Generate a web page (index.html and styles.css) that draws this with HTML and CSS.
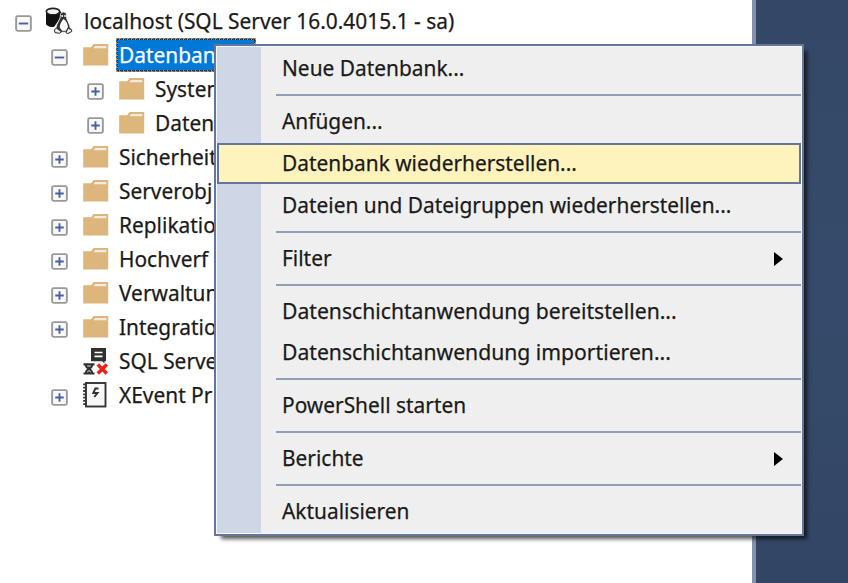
FILE: index.html
```html
<!DOCTYPE html>
<html lang="de">
<head>
<meta charset="utf-8">
<title>Objekt-Explorer</title>
<link rel="stylesheet" href="styles.css">
</head>
<body>
<svg class="defs" width="0" height="0">
  <symbol id="plus" viewBox="0 0 18 18"><rect x="1.2" y="1.2" width="15.6" height="15.6" rx="1.6" fill="#f8f8f8" stroke="#999" stroke-width="2"/><path d="M4.5 9h9M9 4.5v9" stroke="#4560a8" stroke-width="2"/></symbol>
  <symbol id="minus" viewBox="0 0 18 18"><rect x="1.2" y="1.2" width="15.6" height="15.6" rx="1.6" fill="#f8f8f8" stroke="#999" stroke-width="2"/><path d="M4 9h10" stroke="#4560a8" stroke-width="2"/></symbol>
  <symbol id="folder" viewBox="0 0 26 24"><path d="M.2 4.2h8L10.5 1H25.2v21.6H.2z" fill="#dcb67a"/><path d="M12 3h11.3v2.200H10.500z" fill="#f0ebe2"/></symbol>
</svg>
<main class="window">
  <section class="tree">
    <div class="row root"><svg class="toggle"><use href="#minus"/></svg>
      <svg class="icon server" viewBox="0 0 28 28"><path d="M1 4.500v12.800c1.500 2 4 2.800 8 2.800l7-10V4.500z" fill="#111"/><ellipse cx="8" cy="4.600" rx="6.700" ry="3.200" fill="#f4f4f4" stroke="#222" stroke-width="1.600"/><path d="M18.500 5c-2.700 0-3.400 2-3.200 4.700-.2 3-4 7-4.200 10.800l-2 2.500 1 3 5 .8 2-1.600h3.500l2.200 1.600 4-1.800.4-2.400-2-1.800c-.2-3.800-3.700-7.800-3.700-11 .1-3-.5-4.800-3-4.800z" fill="#333" stroke="#fff" stroke-width=".8"/><path d="M18.500 12c-2.300 2.300-4 6-3.700 8.500l2.200 3.200h4l2-3.800c-.2-3-1.800-6-4.500-7.900z" fill="#fff"/><path d="M11.400 21.200l-2 1.500.6 2.900 4.400.7 1.800-1.700zM23 21l-2 4.800 1.800.8 4-2.200-.3-1.400z" fill="#eee" stroke="#333" stroke-width="1"/><circle cx="17.200" cy="9" r=".9" fill="#fff"/><circle cx="20" cy="9" r=".9" fill="#fff"/></svg>
      <span class="label"><span class="text">localhost (SQL Server 16.0.4015.1 - sa)</span></span></div>
    <div class="row"><svg class="toggle"><use href="#minus"/></svg><svg class="icon"><use href="#folder"/></svg><span class="label selected"><span class="text">Datenban</span></span></div>
    <div class="row child"><svg class="toggle"><use href="#plus"/></svg><svg class="icon"><use href="#folder"/></svg><span class="label"><span class="text">System</span></span></div>
    <div class="row child"><svg class="toggle"><use href="#plus"/></svg><svg class="icon"><use href="#folder"/></svg><span class="label"><span class="text">Daten</span></span></div>
    <div class="row"><svg class="toggle"><use href="#plus"/></svg><svg class="icon"><use href="#folder"/></svg><span class="label"><span class="text">Sicherheit</span></span></div>
    <div class="row"><svg class="toggle"><use href="#plus"/></svg><svg class="icon"><use href="#folder"/></svg><span class="label"><span class="text">Serverobj</span></span></div>
    <div class="row"><svg class="toggle"><use href="#plus"/></svg><svg class="icon"><use href="#folder"/></svg><span class="label"><span class="text">Replikatio</span></span></div>
    <div class="row"><svg class="toggle"><use href="#plus"/></svg><svg class="icon"><use href="#folder"/></svg><span class="label"><span class="text">Hochverf</span></span></div>
    <div class="row"><svg class="toggle"><use href="#plus"/></svg><svg class="icon"><use href="#folder"/></svg><span class="label"><span class="text">Verwaltun</span></span></div>
    <div class="row"><svg class="toggle"><use href="#plus"/></svg><svg class="icon"><use href="#folder"/></svg><span class="label"><span class="text">Integratio</span></span></div>
    <div class="row"><span class="toggle"></span>
      <svg class="icon agent" viewBox="0 0 26 28"><path d="M8 1h15v13.200h-1.500v2L19 14.200H8z" fill="#303033"/><path d="M11.500 5.500h8M11.500 9.300h8" stroke="#fff" stroke-width="1.700"/><path d="M.5 16.300h11v2.200H10c0 1.600-1 2.500-2.200 3.400C9 22.800 10 23.800 10 25.500h1.500v2H.5v-2H2c0-1.700 1-2.700 2.200-3.600C3 21 2 20.100 2 18.500H.5z" fill="#303033"/><path d="M4.200 19h3.600M4.200 25l1.800-1.400L7.800 25" stroke="#ddd" fill="none"/><path d="M14.800 17.500l9 9M23.800 17.500l-9 9" stroke="#ee2014" stroke-width="3.400"/></svg>
      <span class="label"><span class="text">SQL Serve</span></span></div>
    <div class="row"><svg class="toggle"><use href="#plus"/></svg>
      <svg class="icon event" viewBox="0 0 26 28"><rect x="3" y="2" width="19.500" height="23.500" fill="#f8f8f8" stroke="#333" stroke-width="1.900"/><path d="M1.600 2.500v23" stroke="#333" stroke-width="2.800" stroke-dasharray="1.800 1.500"/><path d="M15.500 7.500h-3.200l-2 4.500h4.200l-3.200 4" fill="none" stroke="#333" stroke-width="1.900"/></svg>
      <span class="label"><span class="text">XEvent Pr</span></span></div>
  </section>
  <aside class="backdrop"></aside>
  <nav class="menu">
    <div class="item"><span class="text">Neue Datenbank...</span></div>
    <hr>
    <div class="item"><span class="text">Anfügen...</span></div>
    <div class="item active"><span class="text">Datenbank wiederherstellen...</span></div>
    <div class="item"><span class="text">Dateien und Dateigruppen wiederherstellen...</span></div>
    <hr>
    <div class="item"><span class="text">Filter</span><span class="arrow"></span></div>
    <hr>
    <div class="item"><span class="text wide">Datenschichtanwendung bereitstellen...</span></div>
    <div class="item"><span class="text wide">Datenschichtanwendung importieren...</span></div>
    <hr>
    <div class="item"><span class="text">PowerShell starten</span></div>
    <hr>
    <div class="item"><span class="text">Berichte</span><span class="arrow"></span></div>
    <hr>
    <div class="item"><span class="text">Aktualisieren</span></div>
  </nav>
</main>
</body>
</html>
```
FILE: styles.css
```css
* { box-sizing: border-box; }
body {
  margin: 0;
  overflow: hidden;
  background: #fff;
  color: #1a1a1a;
  font: 22.5px/24px "Noto Sans", "Open Sans", sans-serif;
}
.defs { position: absolute; }
.window { position: relative; display: flex; width: 848px; height: 583px; }
.tree { flex: 1; min-width: 0; overflow: hidden; padding-top: 4px; }
.row { display: flex; align-items: center; height: 34px; padding-left: 51px; }
.row.root { padding-left: 15px; }
.row.child { padding-left: 87px; }
.toggle { width: 17px; height: 17px; flex: none; margin: 5px 15px 0 0; }
.icon { width: 26px; height: 24px; flex: none; margin: 0 7px 1px 0; }
.icon.server { width: 28px; height: 28px; margin: 0 8px 0 -2px; }
.icon.agent, .icon.event { height: 28px; margin-bottom: 0; }
.label { display: flex; align-items: center; height: 34px; padding: 0 3px 1px; white-space: nowrap; }
.selected { width: 140px; background: #0078d7; border: 2px dotted #db8b42; outline: 1px dotted #222; outline-offset: -2px; color: #fff; padding: 0 1px 1px; }
.text {
  display: inline-block;
  transform: scaleX(.928);
  transform-origin: 0 50%;
  white-space: nowrap;
  -webkit-text-stroke: .25px currentColor;
}
.text.wide { transform: scaleX(.94); }
.backdrop { width: 96px; border-left: 4px solid #8491ad; background: linear-gradient(#344766, #364b6b 50%, #334564); }
.menu {
  position: absolute;
  left: 214px;
  top: 43.5px;
  width: 590px;
  height: 492px;
  border: 2px solid #64779b;
  padding: 2.4px 1px 0;
  background: linear-gradient(90deg, #fff 1px, #cfd6e5 1px 45px, #efefef 45px);
  box-shadow: inset 0 0 0 1px #f6f7fa, 5px 5px 4px -2px rgba(0, 0, 0, .65);
}
.item { display: flex; align-items: center; justify-content: space-between; height: 41.7px; padding: 0 18px 1px 65px; }
.active { background: #fff3bd; border: 2px solid #64779b; padding-left: 63px; }
.arrow { margin-top: 2px; border: 7px solid transparent; border-left: 9px solid #000; border-right: 0; }
hr { height: 2px; margin: 4.65px 0 4.65px 59px; border: 0; background: #929eb3; }
```
